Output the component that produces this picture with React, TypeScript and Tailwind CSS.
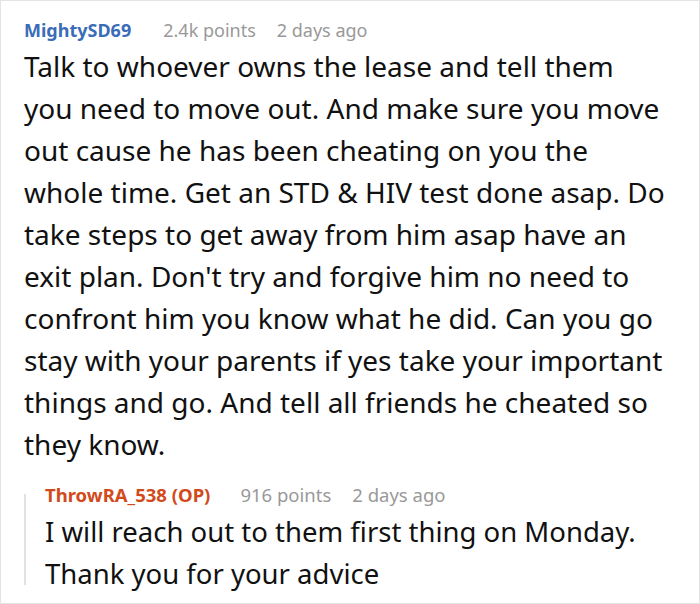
const mainLines = [
  "Talk to whoever owns the lease and tell them",
  "you need to move out. And make sure you move",
  "out cause he has been cheating on you the",
  "whole time. Get an STD & HIV test done asap. Do",
  "take steps to get away from him asap have an",
  "exit plan. Don't try and forgive him no need to",
  "confront him you know what he did. Can you go",
  "stay with your parents if yes take your important",
  "things and go. And tell all friends he cheated so",
  "they know.",
];

export default function App() {
  return (
    <div className="h-[604px] w-[700px] overflow-hidden border border-[#e4e4e4] bg-white pl-[23px] pt-[17px] font-['Noto_Sans',sans-serif]">
      <div className="flex items-baseline text-[18px] leading-[24px]">
        <span className="font-bold text-[#3a6cb8]">MightySD69</span>
        <span className="ml-[32px] text-[#999]">2.4k points</span>
        <span className="ml-[21px] text-[#999]">2 days ago</span>
      </div>
      <p className="mt-[3px] whitespace-nowrap text-[28px] leading-[42px] text-[#111]">
        {mainLines.map((line) => (
          <span key={line} className="block">
            {line}
          </span>
        ))}
      </p>
      <div className="mt-[29px] flex h-[91px] flex-col border-l-2 border-[#e2e2e2] pl-[19px] font-stretch-condensed">
        <div className="-mt-[10px] flex items-baseline text-[18.5px] leading-[22px]">
          <span className="font-bold text-[#d24a1c]">ThrowRA_538 (OP)</span>
          <span className="ml-[30px] text-[#999]">916 points</span>
          <span className="ml-[21px] text-[#999]">2 days ago</span>
        </div>
        <p className="mt-[5px] whitespace-nowrap text-[27.5px] leading-[42px] text-[#111]">
          I will reach out to them first thing on Monday.
          <br />
          Thank you for your advice
        </p>
      </div>
    </div>
  );
}
